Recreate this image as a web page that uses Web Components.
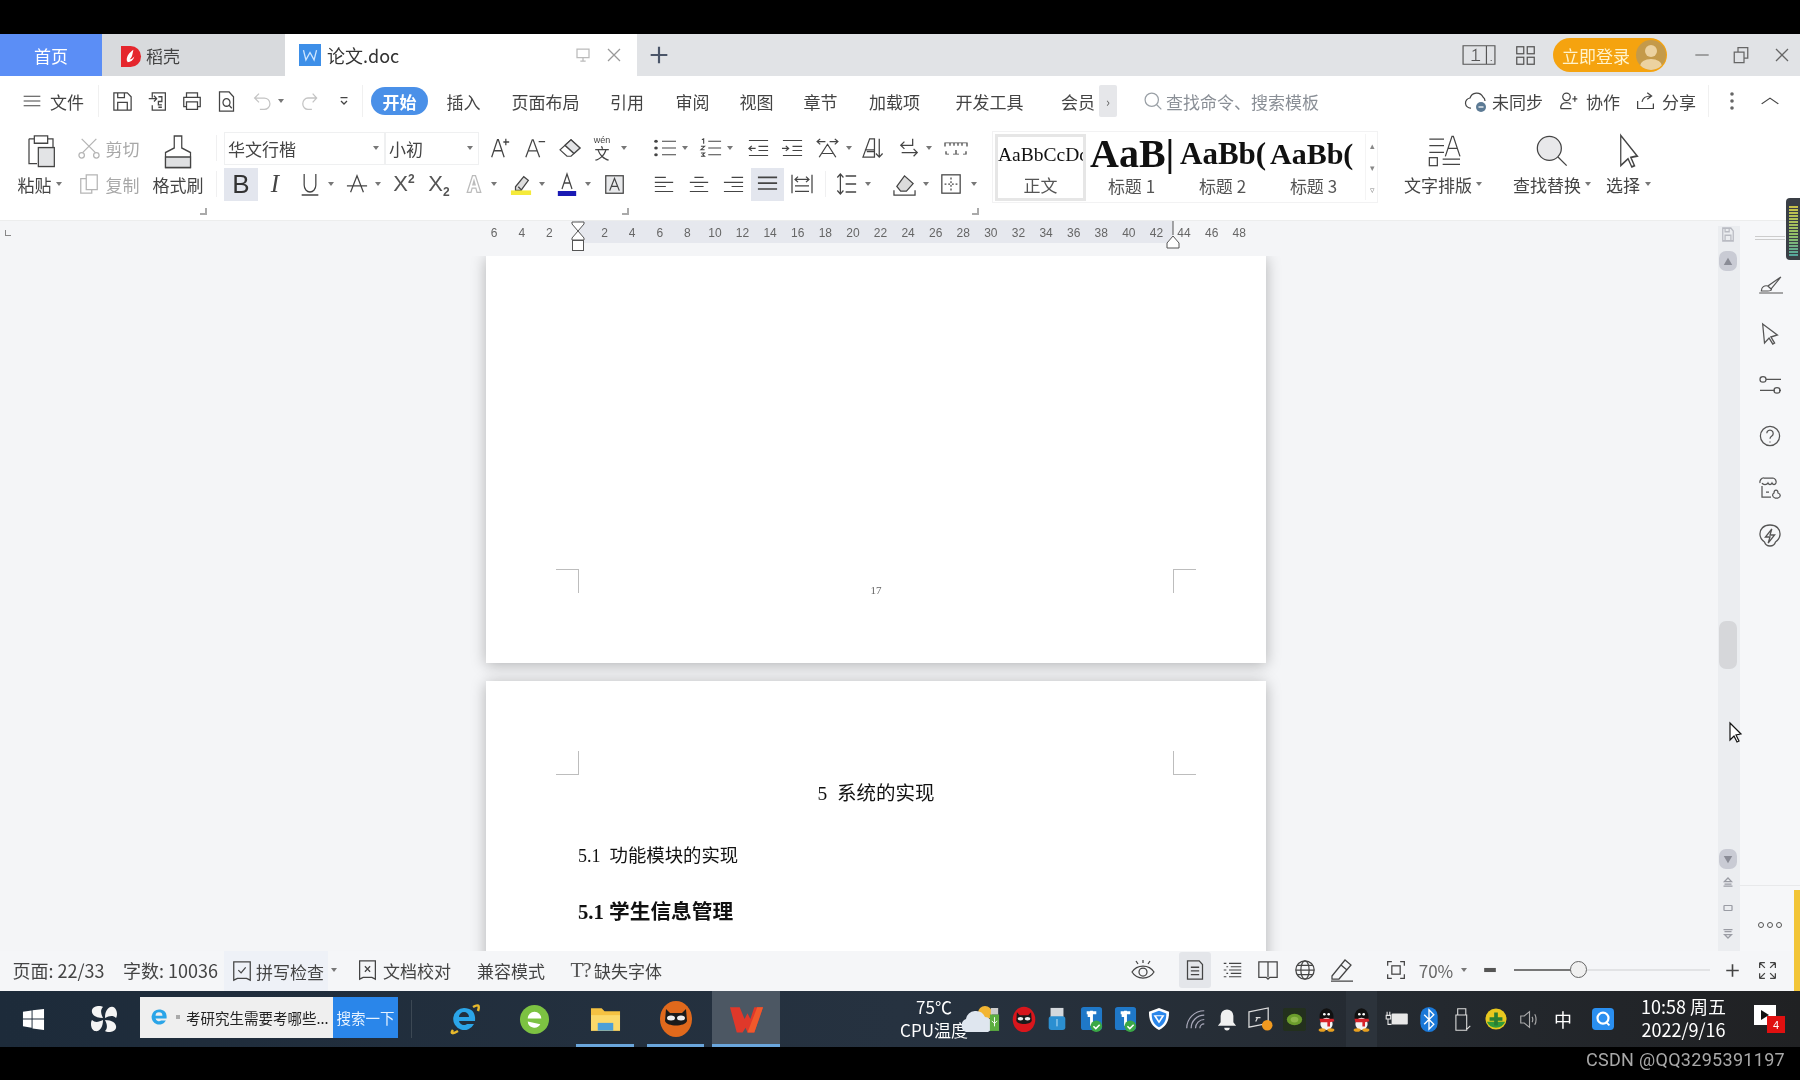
<!DOCTYPE html>
<html lang="zh-CN">
<head>
<meta charset="UTF-8">
<title>论文.doc - WPS</title>
<style>
    html, body { margin: 0; padding: 0; background: #000; }
    body {
        width: 1800px; height: 1080px; overflow: hidden;
        display: flex; flex-direction: column;
        font-family: "Noto Sans CJK SC", "Liberation Sans", sans-serif;
        color: #444;
        filter: blur(.3px);
    }
</style>
</head>
<body>
    <wps-tabbar></wps-tabbar>
    <wps-menubar></wps-menubar>
    <wps-ribbon></wps-ribbon>
    <wps-ruler></wps-ruler>
    <wps-workspace></wps-workspace>
    <wps-statusbar></wps-statusbar>
    <win-taskbar></win-taskbar>
    <screen-mark></screen-mark>
<script>
    const BASE = `
        * { box-sizing: border-box; }
        :host { display: block; flex: none; }
        .strip { display: flex; align-items: center; }
        .c { display: flex; align-items: center; justify-content: center; flex: none; white-space: nowrap; height: 100%; }
        .l { justify-content: flex-start; }
        svg { display: block; flex: none; overflow: visible; }
        .caret { width: 0; height: 0; border: 3px solid transparent; border-top: 4px solid #777; border-bottom: 0; }
    `;

    // each item is [x, width, html, extra class] - the gaps between them become margins
    function strip(items, start = 0) {
        let cur = start;
        return items.map(([x, w, html, cls]) => {
            const m = x - cur;
            cur = x + w;
            return `<span class="c ${cls || ''}" style="margin-left:${m}px;width:${w}px">${html}</span>`;
        }).join('');
    }

    const CARET = '<i class="caret"></i>';

    const PATHS = {
        burger: '<path d="M2 5h20M2 12h20M2 19h20"/>',
        save: '<path d="M3 3h14l4 4v14H3zM7 3v5h7V3M7 21v-8h10v8"/>',
        convert: '<path d="M6 8V3h15v18H6v-5M2 9h9M8 6l3 3-3 3M13 7h4v5h-4v3.5h4M13 18h4"/>',
        print: '<path d="M6 8V3h12v5M6 18H3V8h18v10h-3M6 13h12v8H6z"/>',
        preview: '<path d="M4 2h11l5 5v15H4z"/><circle cx="12" cy="13" r="4"/><path d="M15 16l3 3"/>',
        undo: '<path d="M8 3L3 8l5 5M3 8h11a6.500 6.500 0 0 1 0 13H9"/>',
        redo: '<path d="M16 3l5 5-5 5M21 8H10a6.500 6.500 0 0 0 0 13h5"/>',
        more: '<path d="M5 5h14M6 12l6 6 6-6"/>',
        dblup: '<path d="M5 11l7-7 7 7zM3 20h18M5 16h14"/>',
        dbldn: '<path d="M3 3h18M5 7h14M5 13l7 7 7-7z"/>',
        navbox: '<rect x="4" y="6" width="16" height="12" rx="1"/>',
        search: '<circle cx="10.500" cy="10.500" r="8"/><path d="M16.500 16.500L22 22"/>',
        cloud: '<path d="M7 19a5 5 0 0 1-1-10 7 7 0 0 1 13-1 5 5 0 0 1 2 4"/><circle cx="17" cy="18" r="5" fill="#5c7a94" stroke="none"/><path d="M14.500 18h5" stroke="#fff"/>',
        user: '<circle cx="9" cy="7" r="4.500"/><path d="M2 21c0-5 3-7 7-7 2 0 4 .5 5 2M2 21h13M19 6v7M16 9.500h6"/>',
        share: '<path d="M3 12v9h18v-6M8 13c1-5 5-7 10-7M14 2l5 4-5 4"/>',
        chevup: '<path d="M2 17L12 7l10 10"/>',
        paste: '<path d="M3 4h4M17 4h4v6M3 4v17h6M7 2h10v5H7z"/><rect x="10" y="10" width="12" height="13" fill="#e3e4e6"/>',
        cut: '<path d="M4 2l15 15M20 2L5 17"/><circle cx="4" cy="20" r="3"/><circle cx="20" cy="20" r="3"/>',
        copy: '<path d="M9 2h12v16H9zM9 6H3v16h12v-4"/>',
        brush: '<path d="M9 2h6v8l7 3v10H2V13l7-3z"/><path d="M2 16h20v7H2z" fill="#dfe0e2"/>',
        aplus: '<path d="M2 22L9 3h1l7 19M5 15h10M19 2v7M16 5.500h7"/>',
        aminus: '<path d="M2 22L9 3h1l7 19M5 15h10M16 5h7"/>',
        eraser: '<path d="M2 14L13 3l9 9-9 9h-4z"/><path d="M7 9l9 9"/><path d="M13 3l9 9-6 6-9-9z" fill="#e3e4e6"/>',
        under: '<path d="M5 2v11a7 7 0 0 0 14 0V2M2 23h20"/>',
        strike: '<path d="M5 21L12 3l7 18M8 14h8M1 14h22"/>',
        gray_a: '<path d="M3 22L10 2h4l7 20h-5l-1.500-5h-5L8 22zM10.500 13h3L12 8z"/>',
        hilite: '<path d="M6 15L15 4l5 4-8 11H6z" fill="#ddd"/><path d="M9 15l4 4"/><rect x="1" y="19" width="22" height="5" fill="#f5ea3a" stroke="none"/>',
        colora: '<path d="M6 17L12 2l6 15M8 11h8"/><rect x="1" y="19" width="22" height="5" fill="#1a1ab4" stroke="none"/>',
        boxa: '<rect x="2" y="2" width="20" height="20" fill="#e8e9eb"/><path d="M6.500 19L12 5l5.500 14M8.500 14h7"/>',
        bullet: '<circle cx="3" cy="4" r="1.800" fill="currentColor" stroke="none"/><circle cx="3" cy="12" r="1.800" fill="currentColor" stroke="none"/><circle cx="3" cy="20" r="1.800" fill="currentColor" stroke="none"/><path d="M9 4h14M9 12h14M9 20h14"/>',
        number: '<path d="M9 4h14M9 12h14M9 20h14M2 2l2-1v6M1 10h4l-4 4h4M1 18h4l-2 2 2 2H1" stroke-width="1.200"/>',
        outdent: '<path d="M2 3h20M12 10h10M12 15h10M2 21h20M9 12.500H2M5 9.500l-3 3 3 3"/>',
        indent: '<path d="M2 3h20M12 10h10M12 15h10M2 21h20M1 12.500h7M5 9.500l3 3-3 3"/>',
        cnlayout: '<path d="M2 5h8M5 2L2 5l3 3M14 5h8M19 2l3 3-3 3M4 22L12 8l8 14M7 18h10"/>',
        sort: '<path d="M1 22L8 2h5v20H1zM5 16h8M13 14H3"/><path d="M18 2v19M14.500 18l3.500 4 3.500-4"/>',
        linebr: '<path d="M16 2v7H3M7 5L3 9l4 4M4 17h17M17 13l4 4-4 4"/>',
        ruler2: '<path d="M1 9V4h22v5M6 4v4M10 4v4M14 4v4M18 4v4M2 16v4h3M22 16v4h-3M12 14v6M9 20h6"/>',
        aleft: '<path d="M2 4h12M2 10h20M2 15h12M2 21h20"/>',
        acenter: '<path d="M7 4h10M2 10h20M7 15h10M2 21h20"/>',
        aright: '<path d="M10 4h12M2 10h20M10 15h12M2 21h20"/>',
        ajust: '<path d="M2 4h20M2 11h20M2 18h20" stroke-width="2"/>',
        adist: '<path d="M2 2v20M22 2v20M5 7h14M8 4L5 7l3 3M16 4l3 3-3 3M5 14h14M5 20h14"/>',
        spacing: '<path d="M5 2v20M1.500 5.500L5 2l3.500 3.500M1.500 18.500L5 22l3.500-3.500M11 4h12M11 12h12M11 20h12"/>',
        shade: '<path d="M4 14L12 3l9 8-7 8H8z" fill="#dcdcdc"/><path d="M1 18v5h22v-5"/>',
        border: '<rect x="2" y="2" width="20" height="20"/><path d="M12 5v14M5 12h14" stroke-dasharray="2 2"/>',
        typeset: '<path d="M1 3h11M1 8h11M1 13h11M13 16L18 1h1l5 15M15 10h7M11 18h13M11 22h13"/><rect x="1" y="17" width="6" height="6"/>',
        loupe: '<circle cx="10" cy="10" r="9" fill="#e8e8ea"/><path d="M16.500 16.500L23 23"/>',
        pointer: '<path d="M3 1l18 15-7 1 4 6-3 1-4-6-8 5z"/>',
        monitor: '<path d="M3 3h18v13H3zM12 16v5M8 21h8"/>',
        close: '<path d="M3 3l18 18M21 3L3 21"/>',
        plus: '<path d="M12 2v20M2 12h20" stroke-width="2.600"/>',
        grid4: '<rect x="2" y="2" width="8" height="8"/><rect x="14" y="2" width="8" height="8"/><rect x="2" y="14" width="8" height="8"/><rect x="14" y="14" width="8" height="8"/>',
        min: '<path d="M2 12h20"/>',
        minus: '<path d="M2 12h20" stroke-width="7"/>',
        restore: '<path d="M3 8h13v14H3zM8 8V2h13v14h-5"/>',
        spell: '<path d="M3 2h18v20l-4-2H7l-4 2zM8 11l3 3 5-6"/>',
        proof: '<path d="M3 2h18v20l-4-2H7l-4 2zM9 8l6 6M15 8l-6 6"/>',
        eye: '<path d="M1 14c5-8 17-8 22 0-5 8-17 8-22 0z"/><circle cx="12" cy="14" r="4"/><path d="M12 2v3M5 3l2 3M19 3l-2 3"/>',
        pagev: '<path d="M3 2h14l4 4v16H3zM7 9h10M7 13h10M7 17h10"/>',
        outline: '<path d="M2 4h3M8 4h14M2 12h3M8 12h14M2 20h3M8 20h14M5 8h2M10 8h12M5 16h2M10 16h12" stroke-width="1.300"/>',
        bookv: '<path d="M2 3h20v17h-8l-2 2-2-2H2zM12 3v17"/>',
        web: '<circle cx="12" cy="12" r="10"/><ellipse cx="12" cy="12" rx="4.500" ry="10"/><path d="M2 12h20M3.500 7h17M3.500 17h17"/>',
        pen: '<path d="M2 18L15 2l6 5L9 21H2zM11 7l6 5M1 23h22"/>',
        fit: '<path d="M2 7V2h5M17 2h5v5M22 17v5h-5M7 22H2v-5"/><rect x="7" y="7" width="10" height="10"/>',
        fullscr: '<path d="M3 3h6M3 3v6M3 3l6 6M21 3h-6M21 3v6M21 3l-6 6M3 21h6M3 21v-6M3 21l6-6M21 21h-6M21 21v-6M21 21l-6-6"/>',
        sbrush: '<path d="M2 21h22M4 19c0-4 3-6 6-5l12-9-9 12c1 1-1 2-3 2zM10 14l3 3"/>',
        sarrow: '<path d="M4 2l16 11-7 2 4 6-2 1-4-6-5 5z"/>',
        sliders: '<path d="M8 7h15M2 19h15M21 19h2"/><circle cx="5" cy="7" r="3"/><circle cx="19" cy="19" r="3"/>',
        help: '<circle cx="12" cy="12" r="10.500"/><path d="M8.500 9a3.500 3.500 0 1 1 5.500 3c-1.500 1-2 1.500-2 3M12 18v1"/>',
        shop: '<path d="M2 8a4 4 0 0 1 4-5h9a4 4 0 0 1 3 5c-1 2-3 2-4 0-1 2-3 2-4 0-1 2-5 2-6 0M4 11v11h9M8 17h3"/><path d="M17 23c-3-1-3-4-1-5 0-2 1-3 2-3 1 0 2 1 2 3 3 1 3 4 0 5z"/>',
        bolt: '<path d="M12 1c7 0 11 4 11 9 0 3-2 6-5 8-1 3-3 4-6 4s-5-1-6-4c-3-2-5-5-5-8 0-5 4-9 11-9z"/><path d="M14 5l-7 8h5l-2 6 7-8h-5z"/>'
    };

    function ico(name, w, h = w, color = '', extra = '') {
        const sw = 24 / w * 1.25;
        return `<svg viewBox="0 0 24 24" width="${w}" height="${h}" fill="none" stroke="currentColor" stroke-width="${sw}" preserveAspectRatio="none" style="${color ? 'color:' + color + ';' : ''}${extra}">${PATHS[name]}</svg>`;
    }

    // coloured logos and tray icons
    const penguin = `<svg viewBox="0 0 24 28" width="21" height="25"><ellipse cx="12" cy="11" rx="8" ry="10" fill="#111"/><ellipse cx="12" cy="19" rx="7" ry="7" fill="#f4f4f4"/><path d="M4 13h16l1 3-5 1v5h-3v-5H5z" fill="#d8232a"/><ellipse cx="7" cy="26" rx="4" ry="2" fill="#e8a020"/><ellipse cx="17" cy="26" rx="4" ry="2" fill="#e8a020"/><circle cx="9.500" cy="8" r="1.500" fill="#fff"/><circle cx="14.500" cy="8" r="1.500" fill="#fff"/></svg>`;
    const shield = (bg) => `<svg viewBox="0 0 24 28" width="23" height="27"><rect x="1" y="1" width="22" height="24" rx="3" fill="${bg}"/><path d="M7 7h10M12 5v14h4M8 10h4" stroke="#fff" stroke-width="3" fill="none"/><circle cx="17" cy="21" r="6" fill="#3aa846"/><path d="M14 21l2.500 2.500 4-4" stroke="#fff" stroke-width="1.600" fill="none"/></svg>`;
    const ieLogo = (w, ring) => `<svg viewBox="0 0 32 32" width="${w}" height="${w}"><path d="M16 5a11 11 0 1 0 10 16h-7a5 5 0 0 1-8-3h16c1-9-4-13-11-13zm-5 9a5 5 0 0 1 10 0z" fill="#2ba5e8"/>${ring ? '<path d="M5 27C2 31 5 31 10 28M25 4c5-3 7-2 5 4" fill="none" stroke="#e8b92c" stroke-width="2.500"/>' : ''}</svg>`;

    class Base extends HTMLElement {
        constructor() {
            super();
            const root = this.attachShadow({ mode: 'open' });
            root.innerHTML = `<style>${BASE}${this.css()}</style>${this.html()}`;
        }
        css() { return ''; }
        html() { return ''; }
    }

    customElements.define('wps-tabbar', class extends Base {
        css() {
            return `
                :host { height: 42px; margin-top: 34px; background: #e1e3e6; font-size: 17px; color: #444; }
                .strip { height: 42px; }
                .home { background: #5b8ef6; color: #fff; }
                .dao { background: #d8dadd; justify-content: flex-start; padding-left: 19px; gap: 4px; }
                .doc { background: #fff; justify-content: flex-start; padding-left: 14px; gap: 6px; font-size: 18px; color: #333; }
                .w { width: 22px; height: 22px; background: #3d8fe8; color: #fff; display: flex; align-items: center; justify-content: center; }
                .login { height: 34px; background: #f5a30f; border-radius: 17px; color: #fff3cc; justify-content: flex-start; padding-left: 9px; gap: 6px; }
                .avatar { width: 30px; height: 30px; border-radius: 50%; background: #c49a4a; overflow: hidden; }
            `;
        }
        html() {
            const daoke = `<svg viewBox="0 0 22 24" width="21" height="23"><path d="M0 2h10a11 11 0 0 1 0 22H0z" fill="#e5262d"/><path d="M6 17c0-5 3-8 7-11-1 4-1 8-4 10 2 0 3-1 5-3-1 4-4 6-7 6z" fill="#fff"/></svg>`;
            const w = `<span class="w"><svg viewBox="0 0 22 22" width="18" height="18"><path d="M3 5l3 12 5-9 5 9 3-12" fill="none" stroke="#cfe6ff" stroke-width="1.600"/></svg></span>`;
            const avatar = `<span class="avatar"><svg viewBox="0 0 30 30" width="30" height="30"><circle cx="15" cy="11" r="6" fill="#ecd2a0"/><ellipse cx="15" cy="26" rx="11" ry="7" fill="#ecd2a0"/></svg></span>`;
            return `<div class="strip">${strip([
                [0, 102, '首页', 'home'],
                [102, 183, daoke + '稻壳', 'dao'],
                [285, 352, w + '论文.doc' + `<span style="margin-left:170px;display:flex">${ico('monitor', 16, 16, '#bbb')}</span><span style="margin-left:9px;display:flex">${ico('close', 16, 16, '#999')}</span>`, 'doc'],
                [649, 20, ico('plus', 20, 20, '#4a5568')],
                [1462, 34, `<svg viewBox="0 0 32 24" width="34" height="22" preserveAspectRatio="none" fill="none" stroke="#555" stroke-width="1.100"><path d="M1 2h22v20H1zM23 2h8v20h-8M10 8l3-2v12M9 18h8M27 18h1"/></svg>`],
                [1515, 21, ico('grid4', 21, 21, '#555')],
                [1553, 114, '立即登录' + avatar, 'login'],
                [1694, 16, ico('min', 16, 16, '#777')],
                [1732, 18, ico('restore', 18, 18, '#666')],
                [1774, 16, ico('close', 16, 16, '#666')]
            ])}</div>`;
        }
    });

    customElements.define('wps-menubar', class extends Base {
        css() {
            return `
                :host { height: 52px; background: #fff; font-size: 17px; color: #444; }
                .strip { height: 50px; }
                .pill { height: 28px; background: #4a90e8; border-radius: 14px; color: #fff; font-weight: 700; }
                .more { height: 32px; background: #e6e7ea; color: #666; font-size: 13px; border-radius: 2px; }
                .sep { height: 32px; background: #f0f0f0; }
                .tip { color: #8a8f96; justify-content: flex-start; }
                .clip { overflow: hidden; justify-content: flex-start; }
            `;
        }
        html() {
            return `<div class="strip">${strip([
                [22, 20, ico('burger', 20, 16)],
                [50, 34, '文件'],
                [98, 1, '', 'sep'],
                [111, 23, ico('save', 23, 23)],
                [147, 21, ico('convert', 21, 23)],
                [181, 22, ico('print', 22, 22)],
                [216, 21, ico('preview', 21, 23)],
                [252, 21, ico('undo', 21, 21, '#c4c4c4')],
                [277, 7, CARET],
                [300, 19, ico('redo', 19, 21, '#c4c4c4')],
                [338, 12, ico('more', 12, 12)],
                [362, 1, '', 'sep'],
                [371, 57, '开始', 'pill'],
                [447, 33, '插入'],
                [512, 67, '页面布局'],
                [610, 34, '引用'],
                [676, 33, '审阅'],
                [740, 33, '视图'],
                [804, 33, '章节'],
                [869, 51, '加载项'],
                [955, 69, '开发工具'],
                [1061, 38, '会员', 'clip'],
                [1099, 18, '›', 'more'],
                [1143, 20, ico('search', 20, 20, '#9aa0a6')],
                [1166, 151, '查找命令、搜索模板', 'tip'],
                [1464, 24, ico('cloud', 24, 24)],
                [1492, 51, '未同步'],
                [1559, 20, ico('user', 20, 20)],
                [1586, 34, '协作'],
                [1635, 21, ico('share', 21, 20)],
                [1662, 34, '分享'],
                [1708, 1, '', 'sep'],
                [1727, 10, '<svg width="4" height="20"><circle cx="2" cy="3" r="1.800" fill="#666"/><circle cx="2" cy="10" r="1.800" fill="#666"/><circle cx="2" cy="17" r="1.800" fill="#666"/></svg>'],
                [1760, 20, ico('chevup', 20, 14)]
            ])}</div>`;
        }
    });

    customElements.define('style-tile', class extends Base {
        css() {
            return `
                :host { width: 91px; height: 67px; display: flex; flex-direction: column; align-items: center; overflow: hidden; font-size: 17px; color: #555; flex: none; }
                :host([selected]) { border: 3px solid #e6e6e6; }
                .sample { height: 40px; width: 100%; display: flex; align-items: center; overflow: hidden; white-space: nowrap; font-family: "Liberation Serif", serif; color: #111; }
                .label { height: 27px; line-height: 24px; }
                :host(:not([selected])) .sample { height: 42px; }
            `;
        }
        html() { return `<div class="sample"><slot></slot></div><div class="label">${this.getAttribute('label') || ''}</div>`; }
    });

    customElements.define('wps-ribbon', class extends Base {
        css() {
            return `
                :host { height: 92px; background: #fff; font-size: 17px; color: #444; display: flex; border-bottom: 1px solid #eceded; }
                .left { width: 992px; flex: none; padding-top: 3px; }
                .strip { height: 34px; }
                .strip.r2 { height: 38px; }
                .strip.r3 { height: 16px; }
                .off { color: #a8a8a8; }
                .combo { height: 33px; border: 1px solid #eff0f1; justify-content: flex-start; padding-left: 3px; gap: 0; }
                .on { background: #e3e6ee; height: 33px; }
                .bold { font-size: 26px; font-weight: 500; color: #333; font-family: "Liberation Sans", sans-serif; }
                .ital { font-size: 25px; font-style: italic; font-family: "Liberation Serif", serif; color: #444; }
                .mark { font-size: 22px; font-family: "Liberation Sans", sans-serif; color: #555; }
                .mark sup, .mark sub { font-size: 12px; line-height: 0; font-weight: 700; }
                .sep { height: 26px; background: #f0f0f1; }
                .corner { width: 7px; height: 7px; border-right: 2px solid #aaa; border-bottom: 2px solid #aaa; }
                .py { flex-direction: column; }
                .py small { font-size: 9px; line-height: 10px; height: 10px; font-family: "Liberation Sans", sans-serif; }
                .py b { font-weight: 400; font-size: 15px; line-height: 16px; height: 16px; }
                .gallery { width: 386px; height: 72px; margin-top: 3px; border: 1px solid #f2f2f3; display: flex; align-items: center; padding-left: 2px; flex: none; }
                .ar { width: 14px; height: 66px; margin-left: 6px; flex: none; display: flex; flex-direction: column; align-items: center; justify-content: space-around; color: #888; font-size: 9px; border-left: 1px solid #f4f4f4; }
                .right { flex: 1; padding-top: 3px; }
            `;
        }
        html() {
            const r1 = strip([
                [25, 32, ico('paste', 32, 35, '', 'margin-top:5px')],
                [78, 22, ico('cut', 22, 22, '#b5b5b5')],
                [106, 33, '剪切', 'off'],
                [163, 30, ico('brush', 30, 36, '', 'margin-top:5px')],
                [216, 1, '', 'sep'],
                [224, 161, '华文行楷<span style="margin-left:auto;margin-right:5px;display:flex">' + CARET + '</span>', 'combo'],
                [385, 94, '小初<span style="margin-left:auto;margin-right:5px;display:flex">' + CARET + '</span>', 'combo'],
                [490, 20, ico('aplus', 20, 22)],
                [524, 22, ico('aminus', 22, 22)],
                [558, 24, ico('eraser', 24, 22)],
                [590, 24, '<small>wén</small><b>文</b>', 'py'],
                [620, 7, CARET],
                [653, 24, ico('bullet', 24, 20)],
                [681, 7, CARET],
                [700, 22, ico('number', 22, 20)],
                [726, 7, CARET],
                [747, 23, ico('outdent', 23, 20)],
                [781, 23, ico('indent', 23, 20)],
                [815, 25, ico('cnlayout', 25, 22)],
                [845, 7, CARET],
                [862, 23, ico('sort', 23, 22)],
                [898, 22, ico('linebr', 22, 22)],
                [925, 7, CARET],
                [944, 24, ico('ruler2', 24, 17)]
            ]);
            const r2 = strip([
                [17, 35, '粘贴'],
                [55, 7, CARET],
                [78, 22, ico('copy', 22, 22, '#b5b5b5')],
                [106, 33, '复制', 'off'],
                [153, 50, '格式刷'],
                [216, 1, '', 'sep'],
                [224, 34, 'B', 'bold on'],
                [268, 14, 'I', 'ital'],
                [300, 20, ico('under', 20, 24)],
                [327, 7, CARET],
                [346, 22, ico('strike', 22, 22)],
                [374, 7, CARET],
                [392, 24, '<span>X<sup>2</sup></span>', 'mark'],
                [427, 24, '<span>X<sub>2</sub></span>', 'mark'],
                [465, 18, ico('gray_a', 18, 20, '#bbb')],
                [490, 7, CARET],
                [510, 22, ico('hilite', 22, 22)],
                [538, 7, CARET],
                [557, 20, ico('colora', 20, 24)],
                [584, 7, CARET],
                [604, 21, ico('boxa', 21, 21)],
                [653, 22, ico('aleft', 22, 20)],
                [688, 22, ico('acenter', 22, 20)],
                [722, 23, ico('aright', 23, 20)],
                [751, 33, ico('ajust', 23, 20), 'on'],
                [790, 24, ico('adist', 24, 22)],
                [825, 1, '', 'sep'],
                [836, 21, ico('spacing', 21, 24)],
                [864, 7, CARET],
                [893, 23, ico('shade', 23, 23)],
                [922, 7, CARET],
                [940, 22, ico('border', 22, 22)],
                [970, 7, CARET]
            ]);
            const r3 = strip([
                [200, 7, '<i class="corner"></i>'],
                [622, 7, '<i class="corner"></i>'],
                [972, 7, '<i class="corner"></i>']
            ]);
            const g1 = strip([
                [1428, 32, ico('typeset', 32, 32, '', 'margin-top:5px')],
                [1536, 32, ico('loupe', 32, 32, '', 'margin-top:5px')],
                [1618, 22, ico('pointer', 22, 33, '', 'margin-top:5px')]
            ], 1378);
            const g2 = strip([
                [1404, 68, '文字排版'],
                [1475, 7, CARET],
                [1512, 70, '查找替换'],
                [1584, 7, CARET],
                [1606, 34, '选择'],
                [1644, 7, CARET]
            ], 1378);
            return `
                <div class="left">
                    <div class="strip">${r1}</div>
                    <div class="strip r2">${r2}</div>
                    <div class="strip r3">${r3}</div>
                </div>
                <div class="gallery">
                    <style-tile selected label="正文"><span style="font-size:19.500px">AaBbCcDd</span></style-tile>
                    <style-tile label="标题 1"><span style="font-size:40px;font-weight:700;margin-left:4px">AaB|</span></style-tile>
                    <style-tile label="标题 2"><span style="font-size:31px;font-weight:700;margin-left:3px">AaBb(</span></style-tile>
                    <style-tile label="标题 3"><span style="font-size:30px;font-weight:700;margin-left:2px">AaBb(</span></style-tile>
                    <div class="ar"><span>▴</span><span>▾</span><span>▿</span></div>
                </div>
                <div class="right">
                    <div class="strip">${g1}</div>
                    <div class="strip r2">${g2}</div>
                </div>
            `;
        }
    });

    customElements.define('wps-ruler', class extends Base {
        css() {
            return `
                :host { height: 35px; background: linear-gradient(#e6e8ee, #e6e8ee) 578px 0 / 595px 22px no-repeat, #f4f5f7; font-size: 12px; color: #666; font-family: "Liberation Sans", sans-serif; }
                .n { height: 24px; }
                .m { height: 35px; align-items: flex-start; }
                .strip { height: 35px; align-items: flex-start; }
                .corner { width: 6px; height: 6px; border-left: 1px solid #888; border-bottom: 1px solid #888; margin-top: 9px; }
            `;
        }
        html() {
            const items = [[4, 8, '<i class="corner"></i>', 'm']];
            [6, 4, 2].forEach(n => items.push([577 - 13.8 * n - 12, 24, String(n), 'n']));
            items.push([570, 16, `<svg viewBox="0 0 16 30" width="16" height="30" fill="#fff" stroke="#555"><path d="M2 1h12v2l-6 7-6-7zM8 10l6 7v2H2v-2z"/><rect x="2.500" y="19.500" width="11" height="10"/></svg>`, 'm']);
            for (let n = 2; n <= 48; n += 2) {
                const x = 577 + 13.8 * n - 12;
                if (n === 44) {
                    items.push([1165, 16, `<svg viewBox="0 0 16 30" width="16" height="30" fill="#fff" stroke="#555"><path d="M8 0v14M2 27v-5l6-7 6 7v5z"/></svg>`, 'm']);
                    items.push([x + 1, 22, String(n), 'n']);
                } else {
                    items.push([x, 24, String(n), 'n']);
                }
            }
            return `<div class="strip">${strip(items)}</div>`;
        }
    });

    customElements.define('doc-page', class extends Base {
        css() {
            return `
                :host { width: 780px; background: #fff; box-shadow: 0 2px 14px rgba(0, 0, 0, .28); font-family: "Liberation Serif", "Noto Sans CJK SC", serif; color: #111; overflow: hidden; display: block; flex: none; }
            `;
        }
        html() { return '<slot></slot>'; }
    });

    customElements.define('crop-row', class extends Base {
        css() {
            return `
                :host { display: flex; justify-content: space-between; height: 24px; padding: 0 70px; }
                .m { width: 23px; height: 24px; border: 0 solid #bdbdbd; }
                .m.lt { border-top-width: 1px; border-right-width: 1px; }
                .m.rt { border-top-width: 1px; border-left-width: 1px; }
                .m.lb { border-bottom-width: 1px; border-right-width: 1px; }
                .m.rb { border-bottom-width: 1px; border-left-width: 1px; }
                .t { font-size: 11px; color: #666; align-self: flex-end; line-height: 12px; margin-bottom: -3px; }
            `;
        }
        html() {
            const top = this.hasAttribute('top');
            return `<div class="m ${top ? 'lb' : 'lt'}"></div><div class="t"><slot></slot></div><div class="m ${top ? 'rb' : 'rt'}"></div>`;
        }
    });

    customElements.define('wps-scrollbar', class extends Base {
        css() {
            return `
                :host { width: 22px; height: 725px; margin-top: -30px; background: #ebedf0; display: flex; flex-direction: column; align-items: center; position: relative; flex: none; }
                .book { flex: none; margin-left: -2px; }
                .btn { width: 18px; height: 20px; background: #c9cbd4; border-radius: 7px; flex: none; display: flex; align-items: center; justify-content: center; color: #8a8c96; font-size: 9px; margin-left: -2px; }
                .up { margin-top: 8px; }
                .thumb { width: 18px; height: 48px; background: #d6d7da; border-radius: 7px; flex: none; margin-top: 350px; margin-left: -2px; }
                .dn { margin-top: 180px; }
                .nav { color: #9a9ca4; margin-left: -2px; flex: none; }
                .cursor { position: absolute; left: 11px; top: 496px; z-index: 3; }
            `;
        }
        html() {
            return `
                <div class="book">${ico('save', 14, 17, '#b9bbc2')}</div>
                <div class="btn up">▲</div>
                <div class="thumb"></div>
                <div class="btn dn">▼</div>
                <div class="nav" style="margin-top:7px">${ico('dblup', 12, 12)}</div>
                <div class="nav" style="margin-top:15px">${ico('navbox', 12, 10)}</div>
                <div class="nav" style="margin-top:15px">${ico('dbldn', 12, 12)}</div>
                <svg class="cursor" viewBox="0 0 14 20" width="14" height="20"><path d="M1 1l11 11-5 1 3 6-2 1-3-6-4 4z" fill="#fff" stroke="#111" stroke-width="1.200"/></svg>
            `;
        }
    });

    customElements.define('wps-workspace', class extends Base {
        css() {
            return `
                :host { height: 695px; display: flex; background: #f4f5f7; position: relative; z-index: 1; }
                .canvas { width: 1718px; flex: none; padding-left: 486px; display: flex; flex-direction: column; gap: 18px; overflow: hidden; background: #f4f5f7; }
                .h1 { text-align: center; font-size: 19.500px; line-height: 28px; margin-top: 5px; }
                .h2 { margin: 33px 0 0 92px; line-height: 30px; font-size: 18px; }
                .h2 span { font-size: 18.400px; }
                .h3 { margin: 26px 0 0 92px; line-height: 30px; font-size: 20.700px; font-weight: 700; }
                .side { width: 60px; height: 730px; margin-top: -35px; flex: none; background: #f6f7f9; display: flex; flex-direction: column; align-items: center; color: #555; }
                .handle { width: 30px; height: 4px; border-top: 1px solid #ccc; border-bottom: 1px solid #ccc; margin-top: 15px; flex: none; }
                .line { height: 1px; width: 60px; background: #e8e9eb; margin-top: 337px; flex: none; }
                .dots { margin-top: 36px; flex: none; display: flex; gap: 3px; }
                .dots i { width: 6px; height: 6px; border: 1.500px solid #555; border-radius: 50%; }
                .gauge { position: absolute; right: 0; top: -58px; width: 14px; height: 62px; background: #3a3f46; border-radius: 4px 0 0 4px; padding: 8px 2px 3px 3px; }
                .gauge i { display: block; height: 100%; background: repeating-linear-gradient(transparent 0 2px, #3a3f46 2px 3px), linear-gradient(#c9c24a, #8fbf6a 60%, #4fa3a0); }
                .stripe { position: absolute; right: 0; top: 634px; width: 6px; height: 101px; background: #f2c537; }
            `;
        }
        html() {
            return `
                <div class="canvas">
                    <doc-page style="height:407px;padding-top:313px">
                        <crop-row>17</crop-row>
                    </doc-page>
                    <doc-page style="height:290px;padding-top:70px">
                        <crop-row top></crop-row>
                        <div class="h1">5&nbsp;&nbsp;系统的实现</div>
                        <div class="h2">5.1&nbsp;&nbsp;<span>功能模块的实现</span></div>
                        <div class="h3">5.1 学生信息管理</div>
                    </doc-page>
                </div>
                <wps-scrollbar></wps-scrollbar>
                <div class="side">
                    <div class="handle"></div>
                    ${ico('sbrush', 26, 24, '', 'margin-top:32px')}
                    ${ico('sarrow', 22, 24, '', 'margin-top:26px')}
                    ${ico('sliders', 24, 22, '', 'margin-top:27px')}
                    ${ico('help', 22, 22, '', 'margin-top:30px')}
                    ${ico('shop', 24, 24, '', 'margin-top:28px')}
                    ${ico('bolt', 22, 24, '', 'margin-top:25px')}
                    <div class="line"></div>
                    <div class="dots"><i></i><i></i><i></i></div>
                </div>
                <div class="gauge"><i></i></div>
                <div class="stripe"></div>
            `;
        }
    });

    customElements.define('wps-statusbar', class extends Base {
        css() {
            return `
                :host { height: 40px; background: #f5f6f8; font-size: 17px; color: #444; }
                .strip { height: 38px; }
                .big { font-size: 18px; }
                .spell { background: #eef1f7; height: 40px; justify-content: flex-start; padding-left: 7px; gap: 3px; margin-bottom: -2px; }
                .view { height: 36px; background: #e4e6ea; border-radius: 3px; }
                .z { color: #666; }
                .slider { position: relative; display: block; height: 18px; width: 100%; }
                .slider i { position: absolute; top: 8px; height: 2px; }
                .slider b { position: absolute; left: 56px; top: 0; width: 17px; height: 17px; border: 1.500px solid #666; border-radius: 50%; background: #f0f0f0; }
                .tq { font-family: "Liberation Serif", serif; font-size: 21px; color: #555; letter-spacing: -1px; }
            `;
        }
        html() {
            return `<div class="strip">${strip([
                [13, 91, '页面: 22/33', 'big'],
                [124, 93, '字数: 10036', 'big'],
                [224, 104, ico('spell', 22, 22) + '拼写检查', 'spell'],
                [330, 7, CARET],
                [357, 21, ico('proof', 21, 22)],
                [384, 66, '文档校对'],
                [477, 68, '兼容模式'],
                [570, 21, '<span class="tq">T?</span>'],
                [592, 72, '缺失字体'],
                [1131, 24, ico('eye', 24, 24)],
                [1179, 32, ico('pagev', 20, 22), 'view'],
                [1222, 21, ico('outline', 21, 20)],
                [1257, 22, ico('bookv', 22, 22)],
                [1294, 22, ico('web', 22, 22)],
                [1330, 24, ico('pen', 24, 24)],
                [1386, 20, ico('fit', 20, 20)],
                [1418, 36, '70%', 'z'],
                [1460, 7, CARET],
                [1483, 14, ico('minus', 14, 14, '#555')],
                [1514, 196, `<span class="slider"><i style="left:0;width:60px;background:#777"></i><i style="left:70px;width:126px;background:#e2e3e5"></i><b></b></span>`],
                [1725, 15, ico('plus', 15, 15, '#444')],
                [1757, 21, ico('fullscr', 21, 21)]
            ])}</div>`;
        }
    });

    customElements.define('win-taskbar', class extends Base {
        css() {
            return `
                :host { height: 56px; background: linear-gradient(90deg, #1d2b3a 0, #263240 50%, #262d35 70%, #202123 100%); color: #fff; font-size: 17px; }
                .strip { height: 56px; }
                .bar { box-shadow: inset 0 -3px 0 #6aa6dc; }
                .active { background: #4c5763; }
                .sbox { height: 41px; background: #efefef; color: #222; font-size: 14.500px; justify-content: flex-start; padding-left: 8px; gap: 6px; margin-top: -4px; }
                .sbtn { height: 41px; background: #2a86ea; color: #e6f2ff; font-size: 14.500px; margin-top: -4px; }
                .sep { height: 38px; background: #3c4854; }
                .two { flex-direction: column; line-height: 23px; margin-top: -2px; }
                .time { font-size: 18px; }
                .hi { background: #2c333b; }
                .ime { font-size: 18px; }
            `;
        }
        html() {
            const win = `<svg viewBox="0 0 24 24" width="23" height="23" fill="#fff"><path d="M1 4l9-1.500V11H1zM11 2.300L23 1v10H11zM1 12h9v8.500L1 19zM11 12h12v11l-12-1.700z"/></svg>`;
            const fan = `<svg viewBox="0 0 30 30" width="30" height="30" fill="#f4f4f4"><path d="M14 14C6 14 2 10 3 6c1-4 8-5 11-3-3 3-2 7 0 11zM16 14c0-8 4-12 8-11 4 1 5 8 3 11-3-3-7-2-11 0zM16 16c8 0 12 4 11 8-1 4-8 5-11 3 3-3 2-7 0-11zM14 16c0 8-4 12-8 11-4-1-5-8-3-11 3 3 7 2 11 0z"/></svg>`;
            const green = `<svg viewBox="0 0 32 32" width="31" height="31"><circle cx="16" cy="16" r="15" fill="#7cc242"/><path d="M9 15h14a7 7 0 0 0-14 0zM9 18a7 7 0 0 0 13 3" fill="#fff"/></svg>`;
            const folder = `<svg viewBox="0 0 32 28" width="31" height="28"><path d="M1 3h11l3 3h16v20H1z" fill="#f5c242"/><path d="M1 10h30v16H1z" fill="#fbd96a"/><path d="M8 18h16v8H8z" fill="#4c9fd8"/></svg>`;
            const face = (bg, w) => `<svg viewBox="0 0 34 38" width="${w}" height="${w * 38 / 34}"><ellipse cx="17" cy="19" rx="16" ry="18" fill="${bg}"/><path d="M7 9l4 4h12l4-4 1 12c-2 6-20 6-22 0z" fill="#1b1b1b"/><ellipse cx="12" cy="18" rx="4" ry="2.500" fill="#eee"/><ellipse cx="22" cy="18" rx="4" ry="2.500" fill="#eee"/></svg>`;
            const wps = `<svg viewBox="0 0 36 28" width="35" height="30"><path d="M1 2h10l5 12 3-6 3 6 4-12h9L26 28h-7l-2-5-3 5H8z" fill="#e0382a"/><path d="M19 28L29 2h6L26 28z" fill="#f0592b"/></svg>`;
            const cloud = `<svg viewBox="0 0 40 30" width="40" height="30"><circle cx="27" cy="9" r="7" fill="#f2b533"/><path d="M8 28a7 7 0 0 1 0-13 10 10 0 0 1 19-2 8 8 0 0 1 3 15z" fill="#dfe6ef"/></svg>`;
            const usbGreen = `<svg viewBox="0 0 12 26" width="11" height="24"><rect x="1" y="8" width="10" height="18" fill="#5cae3f"/><rect x="2" y="1" width="8" height="7" fill="#ccc"/><path d="M6 11v10M3 15l3 3 3-3" stroke="#fff" fill="none"/></svg>`;
            const usbBlue = `<svg viewBox="0 0 18 26" width="18" height="24"><rect x="2" y="1" width="14" height="10" fill="#d4d8dc"/><rect x="0" y="10" width="18" height="15" rx="3" fill="#2b8fd1"/><path d="M9 13v8" stroke="#c7e6fa"/></svg>`;
            const guard = `<svg viewBox="0 0 24 26" width="22" height="24"><path d="M12 1l11 4c0 10-3 16-11 20C4 21 1 15 1 5z" fill="#fff"/><path d="M12 4l8 3c0 7-2 12-8 15-6-3-8-8-8-15z" fill="#2a86ea"/><path d="M6 9h12l-6 9z" fill="#fff"/><path d="M9 10h6l-3 5z" fill="#2a86ea"/></svg>`;
            const wifi = `<svg viewBox="0 0 24 24" width="21" height="21" fill="none" stroke="#aab" stroke-width="1.400"><path d="M2 22A20 20 0 0 1 22 2M7 22A15 15 0 0 1 22 7M12 22A10 10 0 0 1 22 12M17 22a5 5 0 0 1 5-5"/></svg>`;
            const bell = `<svg viewBox="0 0 22 24" width="20" height="23" fill="#f0f0f0"><path d="M11 1a7 7 0 0 1 7 7v7l3 4H1l3-4V8a7 7 0 0 1 7-7zM8 21h6a3 3 0 0 1-6 0z"/></svg>`;
            const shot = `<svg viewBox="0 0 26 26" width="25" height="25" fill="none" stroke="#ddd" stroke-width="1.300"><path d="M1 5l20-4v16l-20 4zM8 11h5M8 15l2-4"/><circle cx="20" cy="19" r="5.500" fill="#f29a1f" stroke="none"/></svg>`;
            const nvidia = `<svg viewBox="0 0 24 24" width="23" height="23"><rect width="24" height="24" rx="2" fill="#23301d"/><ellipse cx="12" cy="12" rx="8" ry="6" fill="#6b9c2c"/><ellipse cx="12" cy="12" rx="4" ry="3" fill="#8db64a"/></svg>`;
            const battery = `<svg viewBox="0 0 26 20" width="24" height="18"><rect x="7" y="4" width="18" height="12" rx="1" fill="#e8e8e8"/><path d="M2 2v4M5 2v4M1 6h5v4H1zM3 10v6h4" fill="none" stroke="#e8e8e8" stroke-width="1.200"/></svg>`;
            const bt = `<svg viewBox="0 0 18 26" width="18" height="25"><rect width="18" height="26" rx="9" fill="#1a78d8"/><path d="M4 8l10 10-5 5V3l5 5L4 18" fill="none" stroke="#fff" stroke-width="1.400"/></svg>`;
            const usbw = `<svg viewBox="0 0 20 26" width="18" height="25" fill="none" stroke="#ddd" stroke-width="1.200"><path d="M3 1h9v7H3zM1 8h12v17H1zM13 24l4-4"/></svg>`;
            const plusg = `<svg viewBox="0 0 24 24" width="22" height="22"><circle cx="12" cy="12" r="11.500" fill="#e8c81f"/><path d="M2 15a11 11 0 0 0 20 0z" fill="#2f9a3a"/><path d="M12 5v14M5 12h14" stroke="#2a7d32" stroke-width="4"/></svg>`;
            const vol = `<svg viewBox="0 0 24 24" width="21" height="21" fill="none" stroke="#aaa" stroke-width="1.300"><path d="M2 8h4l6-5v18l-6-5H2zM15 9c1 2 1 4 0 6M18 6c2 3 2 9 0 12"/></svg>`;
            const qb = `<svg viewBox="0 0 24 24" width="22" height="22"><rect width="24" height="24" rx="4" fill="#2a8ff0"/><circle cx="12" cy="11" r="6" fill="none" stroke="#fff" stroke-width="2.400"/><path d="M15 15l4 4" stroke="#fff" stroke-width="2"/></svg>`;
            const notif = `<svg viewBox="0 0 32 32" width="34" height="32"><path d="M1 2h22v20H1z" fill="#fff"/><path d="M8 7l8 5-8 5z" fill="#111"/><rect x="14" y="13" width="18" height="17" fill="#e01010"/><text x="23" y="26" font-size="11" fill="#fff" text-anchor="middle" font-family="Liberation Sans, sans-serif">4</text></svg>`;
            return `<div class="strip">${strip([
                [22, 23, win],
                [89, 30, fan],
                [140, 193, ieLogo(22, false) + '<span style="width:4px;height:4px;background:#aaa"></span>' + '考研究生需要考哪些...', 'sbox'],
                [333, 65, '搜索一下', 'sbtn'],
                [411, 1, '', 'sep'],
                [448, 32, ieLogo(32, true)],
                [519, 31, green],
                [576, 58, folder, 'bar'],
                [647, 57, face('#e0691c', 34), 'bar'],
                [712, 68, wps, 'bar active'],
                [900, 68, '<span>75℃</span><span>CPU温度</span>', 'two'],
                [958, 40, cloud],
                [989, 11, usbGreen],
                [1012, 24, face('#d8161c', 24)],
                [1048, 18, usbBlue],
                [1080, 23, shield('#1f78c8')],
                [1114, 23, shield('#1f78c8')],
                [1148, 22, guard],
                [1185, 21, wifi],
                [1217, 20, bell],
                [1248, 25, shot],
                [1283, 23, nvidia],
                [1316, 21, penguin],
                [1346, 31, penguin, 'hi'],
                [1385, 24, battery],
                [1420, 18, bt],
                [1455, 18, usbw],
                [1485, 22, plusg],
                [1519, 21, vol],
                [1553, 20, '中', 'ime'],
                [1592, 22, qb],
                [1640, 87, '<span>10:58 周五</span><span>2022/9/16</span>', 'two time'],
                [1752, 34, notif]
            ])}</div>`;
        }
    });

    customElements.define('screen-mark', class extends Base {
        css() {
            return `
                :host { height: 34px; background: #000; color: #a8a8a8; font-family: Roboto, "Liberation Sans", sans-serif; font-size: 18px; display: flex; justify-content: flex-end; align-items: flex-start; padding: 2px 15px 0 0; letter-spacing: .3px; }
            `;
        }
        html() { return 'CSDN @QQ3295391197'; }
    });
</script>
</body>
</html>
